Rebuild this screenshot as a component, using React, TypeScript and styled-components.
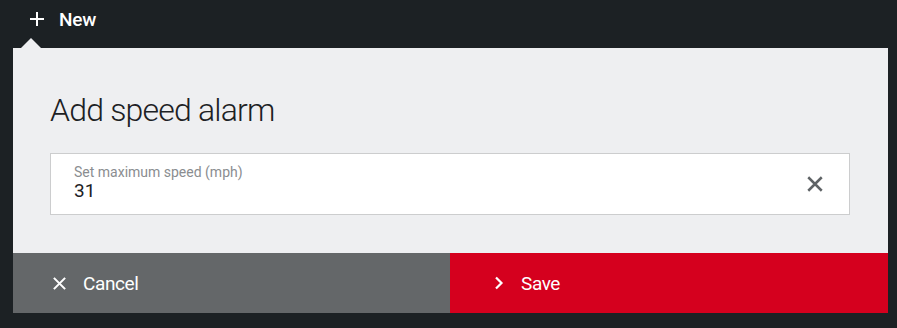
import React, { FC } from "react";
import styled, { createGlobalStyle } from "styled-components";

const GlobalStyle = createGlobalStyle`
  html, body {
    margin: 0;
    padding: 0;
    background: #1c2124;
    font-family: Roboto, "Liberation Sans", sans-serif;
  }
`;

const PlusIcon: FC = () => (
  <svg width="16" height="16" viewBox="0 0 16 16">
    <path d="M8 1v14M1 8h14" stroke="#fff" strokeWidth="2" fill="none" />
  </svg>
);

const CrossIcon: FC<{ size?: number; color?: string }> = ({ size = 16, color = "#fff" }) => (
  <svg width={size} height={size} viewBox="0 0 16 16">
    <path d="M2 2l12 12M14 2L2 14" stroke={color} strokeWidth="2.2" fill="none" />
  </svg>
);

const ChevronIcon: FC = () => (
  <svg width="10" height="14" viewBox="0 0 10 14">
    <path d="M2 1.5l5.5 5.5L2 12.5" stroke="#fff" strokeWidth="2.2" fill="none" />
  </svg>
);

const App: FC = () => {
  return (
    <>
      <GlobalStyle />
      <Page>
        <NewButton>
          <PlusIcon />
          <span>New</span>
        </NewButton>
        <Popover>
          <Body>
            <Title>Add speed alarm</Title>
            <Field>
              <FieldText>
                <FieldLabel>Set maximum speed (mph)</FieldLabel>
                <FieldValue>31</FieldValue>
              </FieldText>
              <ClearButton>
                <CrossIcon size={18} color="#5f6366" />
              </ClearButton>
            </Field>
          </Body>
          <Actions>
            <ActionButton variant="cancel">
              <CrossIcon size={15} />
              <span>Cancel</span>
            </ActionButton>
            <ActionButton variant="save">
              <ChevronIcon />
              <span>Save</span>
            </ActionButton>
          </Actions>
        </Popover>
      </Page>
    </>
  );
};

export default App;

const Page = styled.div`
  width: 897px;
  height: 328px;
  padding: 0 9px 0 13px;
  box-sizing: border-box;
  display: flex;
  flex-direction: column;
`;

const NewButton = styled.div`
  height: 38px;
  display: flex;
  align-items: center;
  gap: 14px;
  padding-left: 16px;
  color: #fff;
  font-size: 19px;
  font-weight: 500;
  letter-spacing: -0.2px;
`;

const Popover = styled.div`
  position: relative;
  margin-top: 10px;
  display: flex;
  flex-direction: column;
  &::before {
    content: "";
    position: absolute;
    top: -10px;
    left: 8px;
    border-left: 10px solid transparent;
    border-right: 10px solid transparent;
    border-bottom: 10px solid #eeeff1;
  }
`;

const Body = styled.div`
  background: #eeeff1;
  padding: 42px 38px 38px 37px;
`;

const Title = styled.h1`
  margin: 0 0 23px;
  font-size: 32px;
  line-height: 40px;
  font-weight: 300;
  color: #1c2124;
  letter-spacing: -0.8px;
`;

const Field = styled.div`
  height: 62px;
  box-sizing: border-box;
  background: #fff;
  border: 1px solid #cccdce;
  display: flex;
  align-items: center;
  justify-content: space-between;
  padding: 0 25px 0 23px;
`;

const FieldText = styled.div`
  display: flex;
  flex-direction: column;
  margin-top: -3px;
`;

const FieldLabel = styled.span`
  font-size: 14px;
  line-height: 16px;
  color: #8a8d90;
`;

const FieldValue = styled.span`
  font-size: 19px;
  line-height: 22px;
  color: #1c2124;
`;

const ClearButton = styled.div`
  display: flex;
  align-items: center;
`;

const Actions = styled.div`
  display: grid;
  grid-template-columns: 437px 1fr;
  height: 60px;
`;

const ActionButton = styled.div<{ variant: "cancel" | "save" }>`
  display: flex;
  align-items: center;
  gap: ${({ variant }) => (variant === "cancel" ? "16px" : "17px")};
  padding-left: ${({ variant }) => (variant === "cancel" ? "39px" : "44px")};
  background: ${({ variant }) => (variant === "cancel" ? "#646769" : "#d5001e")};
  color: #fff;
  font-size: 19px;
  letter-spacing: -0.4px;
`;
